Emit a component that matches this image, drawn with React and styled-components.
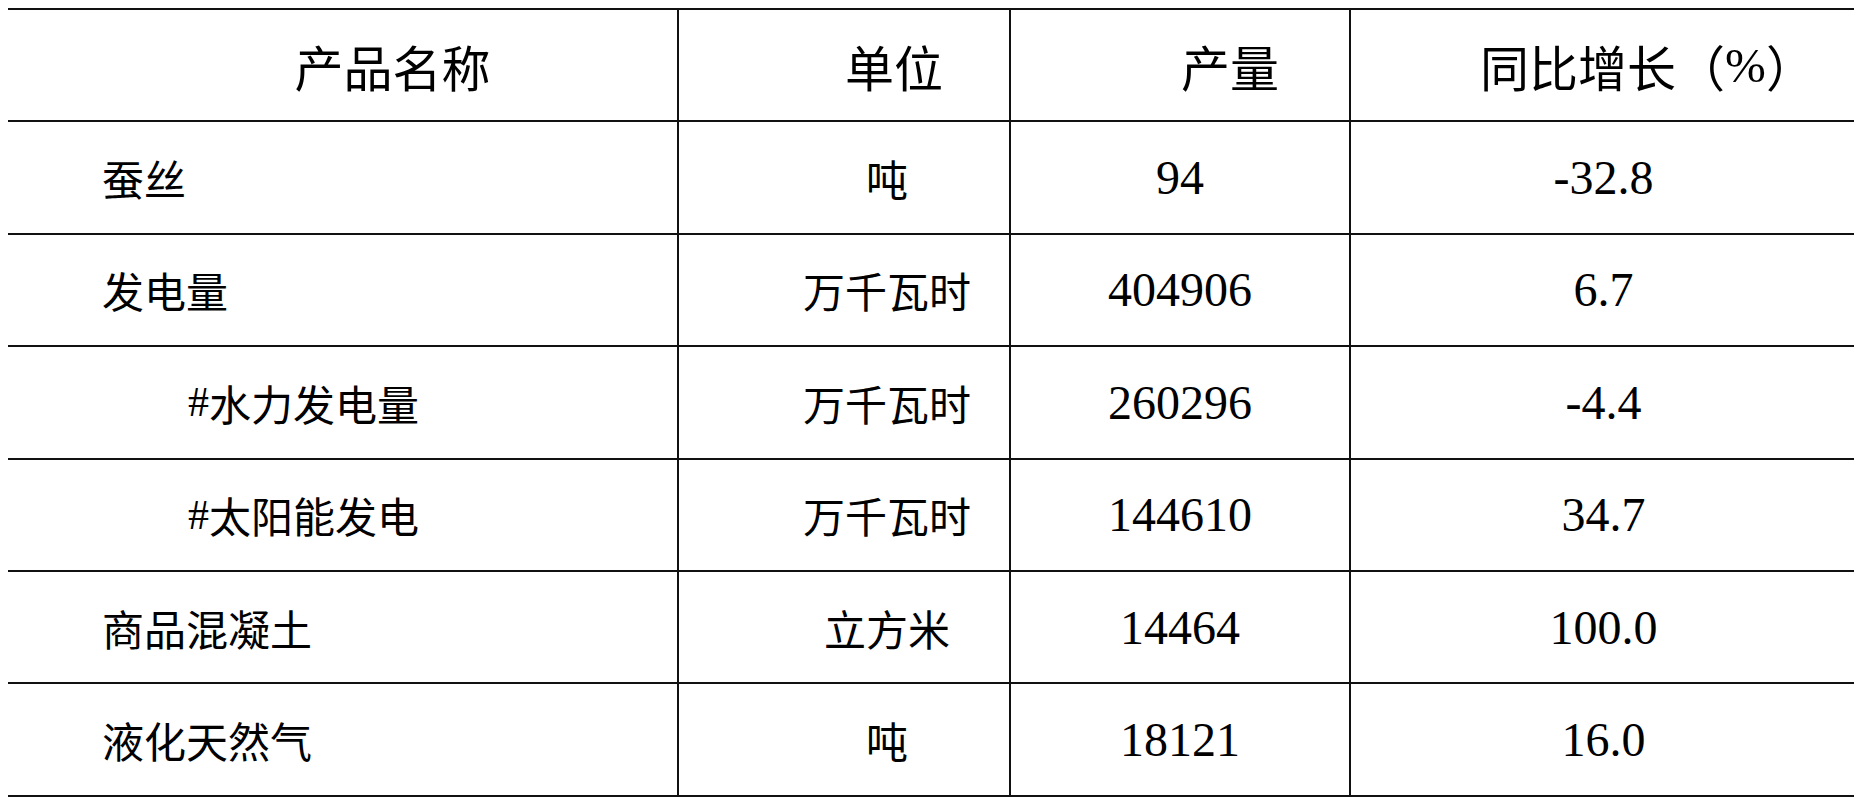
import React from 'react'
import styled, { createGlobalStyle } from 'styled-components'

const GlobalStyle = createGlobalStyle`
  body {
    margin: 8px;
    background: #ffffff;
    color: #000000;
    font-family: "Noto Sans CJK SC", sans-serif;
  }
`

const rows = [
  { name: '蚕丝', unit: '吨', qty: '94', growth: '-32.8' },
  { name: '发电量', unit: '万千瓦时', qty: '404906', growth: '6.7' },
  { name: '水力发电量', unit: '万千瓦时', qty: '260296', growth: '-4.4', sub: true },
  { name: '太阳能发电', unit: '万千瓦时', qty: '144610', growth: '34.7', sub: true },
  { name: '商品混凝土', unit: '立方米', qty: '14464', growth: '100.0' },
  { name: '液化天然气', unit: '吨', qty: '18121', growth: '16.0' },
]

export default function App() {
  return (
    <>
      <GlobalStyle />
      <Table>
        <Row>
          <HeadCell>产品名称</HeadCell>
          <HeadCell $line>单位</HeadCell>
          <HeadCell $line>产量</HeadCell>
          <HeadCell $line $pad={88}>
            同比增长（<Latin>%</Latin>）
          </HeadCell>
        </Row>
        {rows.map((r) => (
          <Row key={r.name}>
            <NameCell $sub={r.sub}>
              {r.sub && <Latin>#</Latin>}
              {r.name}
            </NameCell>
            <UnitCell>{r.unit}</UnitCell>
            <NumCell>{r.qty}</NumCell>
            <NumCell>{r.growth}</NumCell>
          </Row>
        ))}
      </Table>
    </>
  )
}

const Table = styled.div`
  width: 1848px;
  display: flex;
  flex-direction: column;
  border-bottom: 2px solid #111;
`

const Row = styled.div`
  display: grid;
  grid-template-columns: 669px 332px 340px 1fr;
  height: 112.4px;
  box-sizing: border-box;
  border-top: 2px solid #111;
`

const Cell = styled.div`
  display: flex;
  align-items: center;
  box-sizing: border-box;
  border-left: ${(p) => (p.$line ? '2px solid #111' : 'none')};
  white-space: nowrap;
`

const Latin = styled.span`
  font-family: "Liberation Serif", "Times New Roman", serif;
`

const HeadCell = styled(Cell)`
  justify-content: center;
  padding-left: ${(p) => p.$pad || 100}px;
  font-size: 49px;
`

const NameCell = styled(Cell)`
  justify-content: flex-start;
  padding-left: ${(p) => (p.$sub ? 180 : 94)}px;
  font-size: 42px;
`

const UnitCell = styled(Cell).attrs({ $line: true })`
  justify-content: center;
  padding-left: 86px;
  font-size: 42px;
`

const NumCell = styled(Cell).attrs({ $line: true })`
  justify-content: center;
  font-family: "Liberation Serif", "Times New Roman", serif;
  font-size: 48px;
`
